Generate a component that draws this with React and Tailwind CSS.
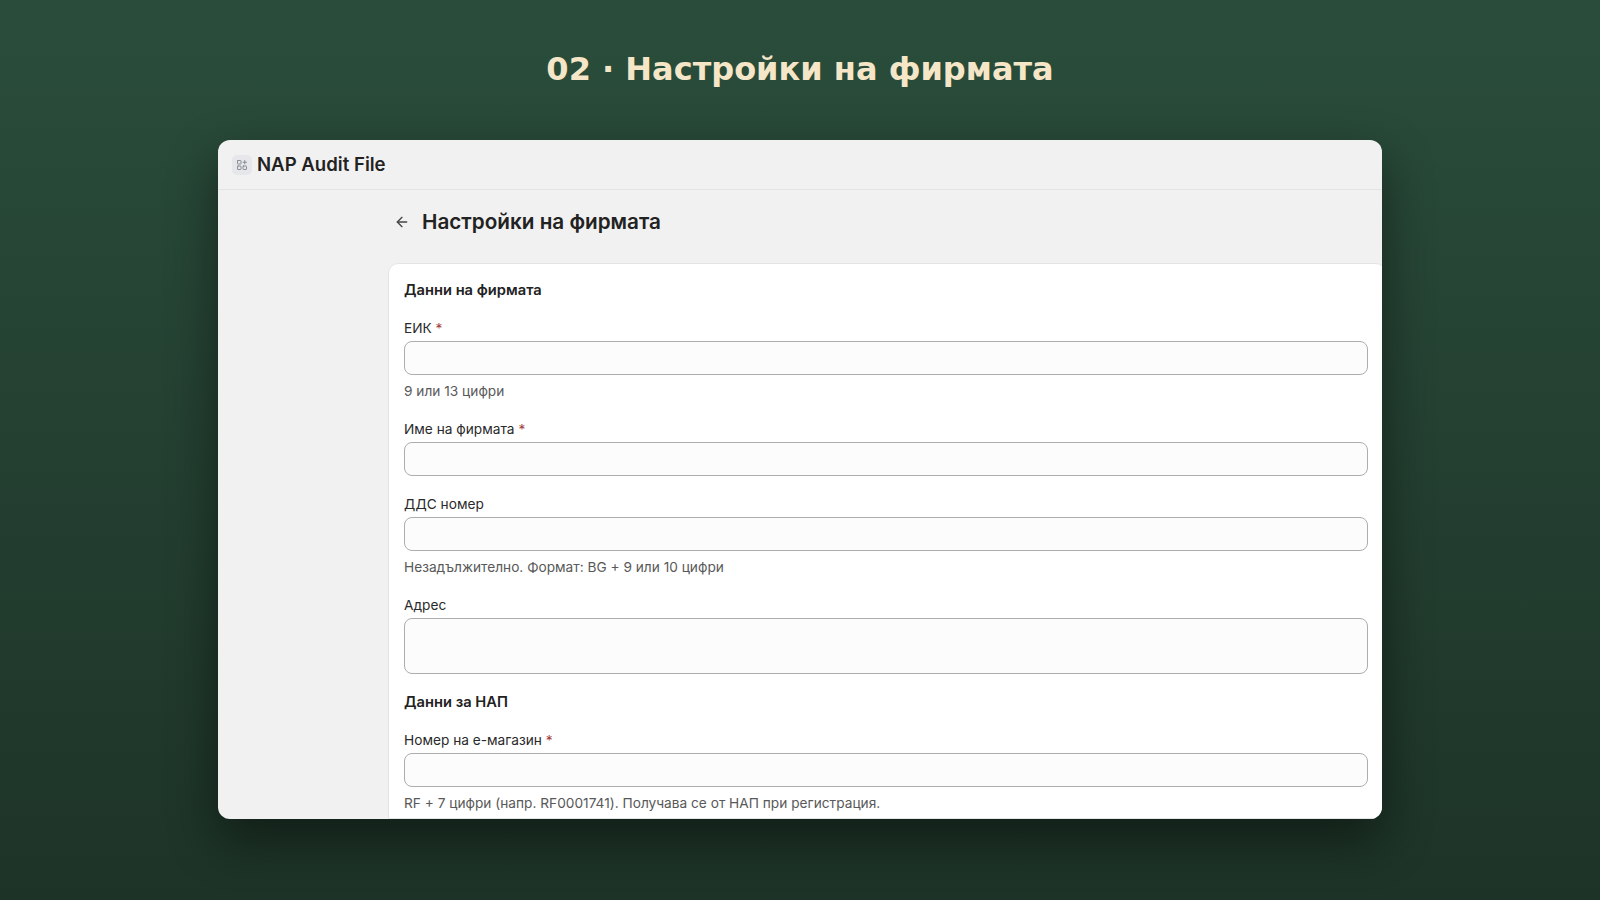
import { ArrowLeft } from "lucide-react";

function GridPlusIcon() {
  return (
    <svg width="12" height="12" viewBox="0 0 24 24" fill="none" stroke="currentColor" strokeWidth="2" strokeLinecap="round" strokeLinejoin="round">
      <rect x="3" y="3" width="7" height="7" rx="1" />
      <rect x="3" y="14" width="7" height="7" rx="1" />
      <rect x="14" y="14" width="7" height="7" rx="1" />
      <path d="M17.5 3v7M14 6.5h7" />
    </svg>
  );
}

function Field({ label, required, hint, tall }) {
  return (
    <div className="flex flex-col">
      <label className="text-[13.7px] leading-[20px] text-[#2a2a2a]">
        {label}
        {required && <span className="text-[#a23b3b]"> *</span>}
      </label>
      {tall ? (
        <textarea className="mt-[3px] h-[56px] resize-none rounded-[8px] border border-[#adadad] bg-[#fcfcfc]" />
      ) : (
        <input className="mt-[3px] h-[34px] rounded-[8px] border border-[#adadad] bg-[#fcfcfc]" />
      )}
      {hint && (
        <p className="mt-[6px] text-[13.7px] leading-[20px] text-[#595959]">{hint}</p>
      )}
    </div>
  );
}

export default function App() {
  return (
    <main className="min-h-screen bg-gradient-to-b from-[#2a4d3b] to-[#1d3327] flex flex-col items-center">
      <h1
        className="pt-[49px] text-[32px] leading-[40px] font-bold text-[#f5e6c8]"
        style={{ fontFamily: '"DejaVu Sans", sans-serif' }}
      >
        02 · Настройки на фирмата
      </h1>

      <section
        className="mt-[51px] w-[1164px] h-[679px] rounded-[12px] bg-[#f1f1f1] overflow-hidden flex flex-col shadow-[0_20px_50px_rgba(0,0,0,0.45)]"
        style={{ fontFamily: 'Inter, "Noto Sans", sans-serif' }}
      >
        <header className="h-[50px] shrink-0 px-[14px] flex items-center gap-[5px] border-b border-[#e4e4e4]">
          <span className="w-[20px] h-[20px] rounded-[5px] bg-[#e6e7ea] flex items-center justify-center text-[#8a8d94]">
            <GridPlusIcon />
          </span>
          <span className="text-[18.6px] font-semibold text-[#222]">NAP Audit File</span>
        </header>

        <div className="flex-1 min-h-0 pl-[170px] flex flex-col">
          <div className="pt-[16px] pl-[6px] h-[47px] flex items-center gap-[12px] text-[#222]">
            <ArrowLeft size={16} strokeWidth={2} className="text-[#444]" />
            <h2 className="text-[20.7px] font-semibold leading-[30px]">Настройки на фирмата</h2>
          </div>

          <div className="mt-[26px] -mr-[4px] flex-1 rounded-tl-[10px] rounded-tr-[10px] border border-[#e4e4e4] bg-white pt-[16px] pl-[15px] pr-[17px] flex flex-col gap-[18px]">
            <h3 className="text-[14.7px] leading-[20px] font-semibold text-[#222]">Данни на фирмата</h3>
            <Field label="ЕИК" required hint="9 или 13 цифри" />
            <Field label="Име на фирмата" required />
            <Field label="ДДС номер" hint="Незадължително. Формат: BG + 9 или 10 цифри" />
            <Field label="Адрес" tall />
            <h3 className="text-[14.7px] leading-[20px] font-semibold text-[#222]">Данни за НАП</h3>
            <Field
              label="Номер на е-магазин"
              required
              hint="RF + 7 цифри (напр. RF0001741). Получава се от НАП при регистрация."
            />
          </div>
        </div>
      </section>
    </main>
  );
}
